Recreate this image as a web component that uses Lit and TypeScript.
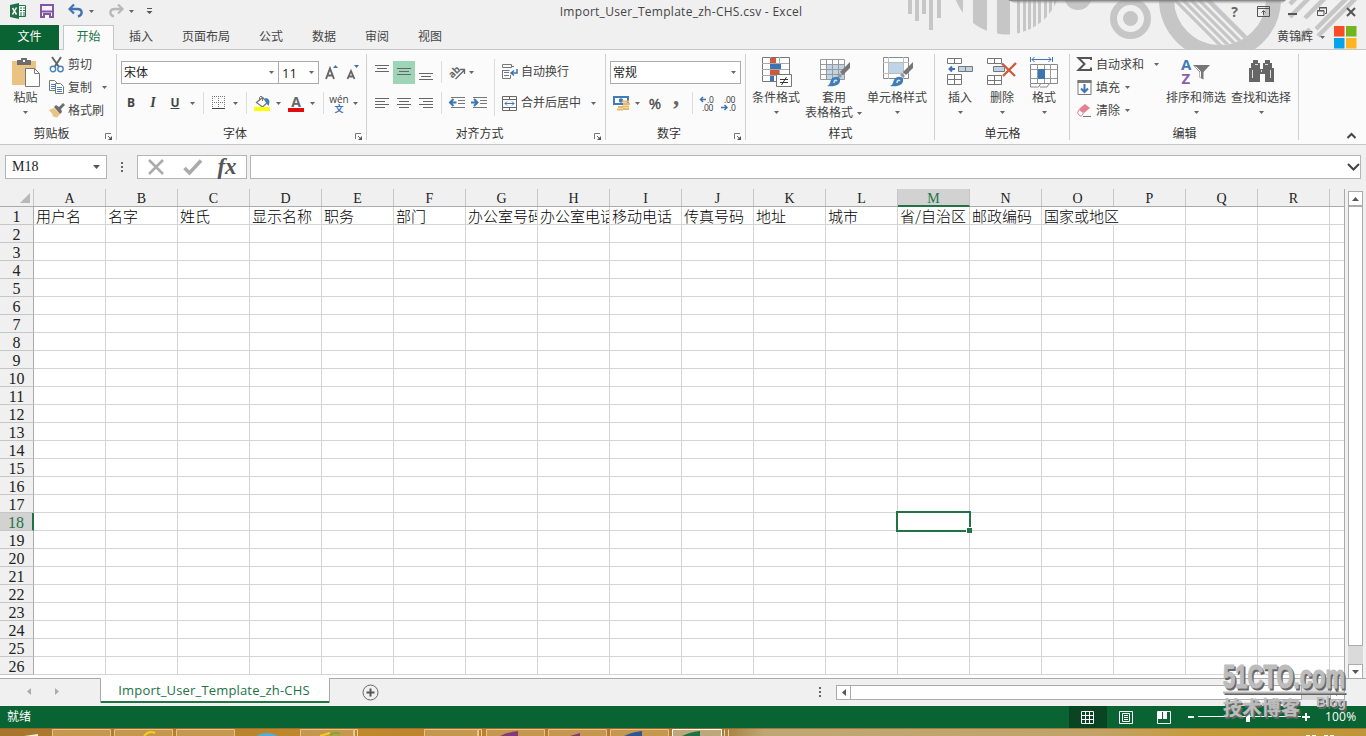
import {LitElement, html, svg, css} from 'lit';
import {customElement, property} from 'lit/decorators.js';
import {classMap} from 'lit/directives/class-map.js';

const COLUMNS = 'ABCDEFGHIJKLMNOPQR'.split('');
const ROWS = Array.from({length: 26}, (_, i) => i + 1);
const HEADERS = ['用户名', '名字', '姓氏', '显示名称', '职务', '部门', '办公室号码', '办公室电话', '移动电话',
    '传真号码', '地址', '城市', '省/自治区', '邮政编码', '国家或地区'];
const ACTIVE_COL = 'M';
const ACTIVE_ROW = 18;

const icon = (w: number, h: number, body: unknown) =>
    html`<svg class="icon" width=${w} height=${h} viewBox="0 0 ${w} ${h}" fill="none">${body}</svg>`;

const arrow = html`<svg class="icon arrow" width="5" height="3" viewBox="0 0 5 3"><path d="M0 0h5L2.5 3z" fill="#666"/></svg>`;
const sep = html`<i class="sep"></i>`;

// horizontal strokes given as [x, y, width]
const lines = (list: number[][], w = 15, h = 14) =>
    icon(w, h, list.map(([x, y, l]) => svg`<path d="M${x} ${y + .5}h${l}" stroke="#666"/>`));

const brush = svg`
    <path d="M30 5v6l-7 7-3-3z" fill="#777"/>
    <path d="M19 16l3 3-2 2-3-3z" fill="#999"/>
    <path d="M7 29c3-1 3-4 4-6 2-4 8-4 9-1 1 6-5 8-13 7z" fill="#3f7cb8"/>
    <path d="M14 26c0-3 2-3 3-2" stroke="#d5e6f4" stroke-width="1.5"/>`;

const icons = {
    excel: icon(17, 16, svg`
        <path d="M8 2.500h7.500v11H8" fill="#fff" stroke="#217346"/>
        <path d="M10 5h2M13 5h2M10 7.500h2M13 7.500h2M10 10h2M13 10h2M10 12h2M13 12h2" stroke="#217346" stroke-width="1.2"/>
        <path d="M0 2l9-2v16l-9-2z" fill="#1e7145"/>
        <path d="M2.500 5l4 6.500M6.500 4.500l-4 7" stroke="#fff" stroke-width="1.500"/>`),
    save: icon(14, 14, svg`
        <path d="M1 1h12v12H1z" fill="#f8f3fb" stroke="#8456a5" stroke-width="2"/>
        <path d="M1 7.500h12" stroke="#8456a5" stroke-width="2"/>
        <path d="M3 9h8v5H3z" fill="#8456a5"/><path d="M5 11h4v3H5z" fill="#fff"/>`),
    undo: icon(16, 14, svg`<path d="M2 5h7c6 0 6 6 1 7.500" stroke="#3f74b3" stroke-width="2.400"/><path d="M6 .5L1.500 5 6 9.500" stroke="#3f74b3" stroke-width="2.200"/>`),
    redo: icon(16, 14, svg`<path d="M14 5H7C1 5 1 11 6 12.500" stroke="#b8b8b8" stroke-width="2.400"/><path d="M10 .5L14.500 5 10 9.500" stroke="#b8b8b8" stroke-width="2.200"/>`),
    paste: icon(30, 31, svg`
        <path d="M1 4h24v24H1z" fill="#eac282"/>
        <path d="M6 3h4V1h6v2h4v5H6z" fill="#6d6d6d"/><path d="M12 3h2v2h-2z" fill="#fff"/>
        <path d="M14.500 11.500h9l5 5v13h-14z" fill="#fff" stroke="#777"/><path d="M23.500 11.500v5h5" stroke="#777"/>`),
    cut: icon(16, 16, svg`
        <path d="M3 0l7 10M12 0L5.500 10" stroke="#666" stroke-width="2"/>
        <circle cx="4" cy="12" r="2.700" stroke="#4a80b8" stroke-width="1.400"/><circle cx="11.500" cy="12" r="2.700" stroke="#4a80b8" stroke-width="1.400"/>`),
    copy: icon(16, 15, svg`
        <path d="M.5.5h5l3 3v7h-8z" fill="#fff" stroke="#777"/><path d="M2 4.500h4M2 6.500h4M2 8.500h4" stroke="#4a80b8"/>
        <path d="M6.500 3.500h5l3 3v7h-8z" fill="#fff" stroke="#777"/><path d="M8 7.500h5M8 9.500h5M8 11.500h5" stroke="#4a80b8"/>`),
    painter: icon(16, 15, svg`
        <path d="M0 7l5-2 6 6-3 3.500-4-1-1-3z" fill="#eac282"/>
        <path d="M5 4l2-2 3 2 4-4 2 2-4 4 1 3-2 2z" fill="#6d6d6d"/>`),
    border: icon(14, 14, svg`
        <path d="M.5 0v13M6.500 0v13M12.500 0v13M0 .5h13M0 6.500h13" stroke="#777" stroke-dasharray="1 1"/><path d="M0 12.500h13" stroke="#444"/>`),
    fill: icon(17, 17, svg`
        <path d="M2.500 7.500l6-5 5 5-5 4.500z" fill="#fff" stroke="#777" stroke-width="1.300"/><path d="M5.500 6V2.500q1.500-3 3 0V6" stroke="#777"/>
        <path d="M11 3c5 0 5 4 3.500 8l-3-4z" fill="#3f7cb8"/><path d="M0 12h16v4H0z" fill="#ff0"/>`),
    orient: icon(17, 16, svg`
        <text x="0" y="11" class="ab" transform="rotate(-45 6 9)">ab</text>
        <path d="M6.500 15l9-9M15.500 10V5.500H11" stroke="#666" stroke-width="1.300"/>`),
    outdent: icon(17, 12, svg`
        <path d="M2 .5h14M9 3.500h7M9 6.500h7M2 10.500h14" stroke="#777"/><path d="M7.500 5.500H2M4.500 2L1 5.500 4.500 9" stroke="#3f74b3" stroke-width="2"/>`),
    indent: icon(17, 12, svg`
        <path d="M2 .5h14M9 3.500h7M9 6.500h7M2 10.500h14" stroke="#777"/><path d="M0 5.500h5.500M3 2l3.500 3.500L3 9" stroke="#3f74b3" stroke-width="2"/>`),
    wrap: icon(17, 16, svg`
        <path d="M.5.500h9v3h-9zM.5 6v8.500h8V11M.5 6.500h7" stroke="#777"/><path d="M2 8.500h5M2 11.500h5" stroke="#777"/>
        <path d="M9 2.500h3" stroke="#777"/><path d="M15 5v4H9.500M12 6.500L9 9l3 2.500" stroke="#3f74b3" stroke-width="1.500"/>`),
    merge: icon(15, 15, svg`
        <path d="M.5.500h14v14H.5zM0 3.500h15M0 11.500h15M7.500 0v3M7.500 12v3" stroke="#666"/>
        <path d="M3 7.500h9M5 5.500l-2 2 2 2M10 5.500l2 2-2 2" stroke="#3f74b3"/>`),
    money: icon(17, 17, svg`
        <path d="M1 2h14v7H1z" fill="#fff" stroke="#3f7cb8" stroke-width="2"/><circle cx="8" cy="5.500" r="2.200" fill="#3f7cb8"/>
        <path d="M9 6.500h7M10 9h7M9 11.500h7M5 12h5M4 14.500h6M10 14h6" stroke="#e5b96c" stroke-width="1.800"/>`),
    lessDec: icon(16, 15, svg`
        <path d="M7 3.500H2M4 1L1.500 3.500 4 6" stroke="#3f74b3" stroke-width="1.500"/>
        <text x="8" y="7" class="dec">.0</text><text x="3" y="15" class="dec">.00</text>`),
    moreDec: icon(16, 15, svg`
        <path d="M0 11.500h6M3.500 9L6 11.500 3.500 14" stroke="#3f74b3" stroke-width="1.500"/>
        <text x="3" y="7" class="dec">.00</text><text x="8" y="15" class="dec">.0</text>`),
    cond: icon(31, 31, svg`
        <path d="M.5.500h27v24H.5z" fill="#fff" stroke="#777"/><path d="M8.500 0v24M17.500 0v24M0 6.500h27M0 12.500h27M0 18.500h27" stroke="#aaa"/>
        <path d="M8 1h6v5H8z" fill="#d1593a"/><path d="M8 7h11v5H8z" fill="#3f74b3"/><path d="M8 13h9v5H8z" fill="#d1593a"/><path d="M8 19h4v5H8z" fill="#3f74b3"/>
        <path d="M14.500 17.500h15v12h-15z" fill="#fff" stroke="#777"/><path d="M18 22.500h8M18 25.500h8M24.500 20l-5 8" stroke="#333"/>`),
    table: icon(31, 30, svg`
        <path d="M.5 2.500h24v20H.5z" fill="#fff"/><path d="M7 8h18v15H7z" fill="#c0d4e7"/>
        <path d="M.5 2.500h24v20H.5zM6.500 2v20M12.500 2v20M18.500 2v20M0 7.500h25M0 12.500h25M0 17.500h25" stroke="#999"/>${brush}`),
    cellStyle: icon(31, 30, svg`
        <path d="M.5.500h25v21H.5z" fill="#fff" stroke="#888"/><path d="M5.500 0v22M20.500 0v22M0 5.500h26M0 16.500h26" stroke="#bbb"/>
        <path d="M6 6h14v10H6z" fill="#c0d4e7"/>${brush}`),
    insert: icon(27, 30, svg`
        <path d="M.5 1.500h14v5H.5zM7.500 1v6M.5 17.500h14v10H.5zM7.500 17v11M0 22.500h15" fill="#fff" stroke="#777"/>
        <path d="M11.500 9.500h14v5h-14zM18.500 9v6" fill="#c0d4e7" stroke="#777"/><path d="M8 12H3M5 9.500L2.500 12 5 14.500" stroke="#3f74b3" stroke-width="2"/>`),
    remove: icon(31, 30, svg`
        <path d="M.5 1.500h14v5H.5zM7.500 1v6M.5 18.500h14v9H.5zM7.500 18v10M0 23.500h15" fill="#fff" stroke="#777"/>
        <path d="M6.500 9.500h11v5h-11z" fill="#c0d4e7" stroke="#777"/><path d="M15 6.500L28 19M29 6L16 19" stroke="#cf5a3c" stroke-width="2.400"/>`),
    format: icon(29, 31, svg`
        <path d="M.5 0v5M22.500 0v5M2 2.500h19M4.500 0L2 2.500 4.500 5M18.500 0L21 2.500 18.500 5" stroke="#3f74b3"/>
        <path d="M.5 7.500h27v19H.5z" fill="#fff" stroke="#888"/><path d="M7.500 7v19M14.500 7v19M20.500 7v19M0 12.500h27M0 21.500h27" stroke="#999"/>
        <path d="M8 12h7v10H8z" fill="#3f74b3"/><path d="M.5 27v3h8l2-3M10 30h7l2-3" stroke="#888" fill="#fff"/>`),
    sum: icon(15, 15, svg`<path d="M14 3V1H1.500l6 6-6 6H14v-2.500" stroke="#555" stroke-width="2"/>`),
    down: icon(14, 15, svg`<path d="M.5.500h13v14H.5z" fill="#fff" stroke="#777"/><path d="M0 0h14v3H0z" fill="#777"/>
        <path d="M7 4v8M3.500 8.500L7 12l3.500-3.500" stroke="#3f74b3" stroke-width="2"/>`),
    eraser: icon(15, 13, svg`<path d="M8 0l5 4-6 5-5-4z" fill="#e5808f"/><path d="M2 5.500l4.500 3.500-2 3H3L.5 9z" fill="#fff" stroke="#e5808f"/><path d="M6 12.500h8" stroke="#777"/>`),
    sort: icon(31, 28, svg`
        <text x="0" y="13" class="az a">A</text><text x=".5" y="27" class="az z">Z</text>
        <path d="M12 8h17l-6.500 7v7.500l-4-2V15z" fill="#777"/><path d="M14.500 9.500l5 5v6" stroke="#fff"/>`),
    find: icon(27, 27, svg`
        <path d="M5 3h5v3h2v6h3V6h2V3h5v3h2v5h2v14h-9v-8h-5v8H1V11h2V6h2z" fill="#666"/>
        <path d="M4.500 13v8M22.500 13v8M7 7.500h3M17 7.500h3M13.500 13v2" stroke="#ddd"/>`),
    launcher: icon(8, 8, svg`<path d="M.5 6V.5H6" stroke="#777"/><path d="M3 3l3 3" stroke="#666"/><path d="M7 3v4H3z" fill="#555"/>`),
};

const TOP_LINES = [[0, 0, 14], [2, 3, 10], [0, 6, 14]];
const CENTER_LINES = [[0, 0, 14], [2, 3, 10], [0, 6, 14], [2, 9, 10]];

@customElement('ribbon-group')
export class RibbonGroup extends LitElement {
    @property({type: String})
    label = '';

    @property({type: Boolean})
    launcher = false;

    static override styles = css`
      :host {
        display: flex;
        flex-direction: column;
        flex: none;
        box-sizing: border-box;
        height: 90px;
        position: relative;
      }
      :host::after {
        content: '';
        position: absolute;
        right: 0;
        top: 4px;
        bottom: 0;
        width: 1px;
        background: #cfcfcf;
      }
      .content {
        height: 76px;
        flex: none;
        display: flex;
      }
      .foot {
        height: 16px;
        flex: none;
        display: grid;
        grid-template-columns: 1fr 14px;
        align-items: center;
        text-align: center;
        color: #333;
      }
      .plain {
        grid-template-columns: 1fr;
      }
      .icon {
        display: block;
        margin: 6px 0 0 2px;
      }
    `;

    override render() {
        return html`
            <div class="content"><slot></slot></div>
            <div class=${classMap({foot: true, plain: !this.launcher})}><span>${this.label}</span>${this.launcher ? icons.launcher : ''}</div>
        `;
    }
}

@customElement('app-root')
export class AppRoot extends LitElement {
    static override styles = css`
      :host {
        display: flex;
        flex-direction: column;
        position: relative;
        width: 1366px;
        height: 736px;
        overflow: hidden;
        background: #f0f0f0;
        color: #444;
        font: 12px/16px 'Open Sans', 'Noto Sans CJK SC', sans-serif;
        white-space: nowrap;
      }
      .icon { display: block; flex: none; overflow: visible; }
      .decor { position: absolute; top: 0; left: 0; }
      .title-bar, .tabs { position: relative; display: flex; align-items: center; flex: none; }
      .title-bar { height: 25px; }
      .quick { display: grid; grid-template-columns: 30px 28px 21px 19px 21px 17px 18px; align-items: center; padding: 0 0 3px 10px; width: 174px; }
      .title { flex: 1; text-align: center; padding: 0 42px 2px 0; letter-spacing: 0.28px; }
      .controls { display: grid; grid-template-columns: repeat(5, 29px); justify-items: center; align-items: center; width: 146px; padding-bottom: 2px; }
      .q { font-weight: bold; font-size: 14px; color: #666; }
      .tabs { height: 24px; border-bottom: 1px solid #c6c6c6; }
      .tab { text-align: center; height: 25px; line-height: 23px; box-sizing: border-box; }
      .file { width: 59px; background: #0a6332; color: #fff; margin-right: 4px; }
      .home { width: 51px; border: 1px solid #c6c6c6; border-bottom: 0; background: #fbfbfb; color: #217346; line-height: 22px; }
      .insert { width: 54px; }
      .page { width: 76px; }
      .formula { width: 54px; }
      .data { width: 52px; }
      .user { display: flex; align-items: center; gap: 7px; margin-left: auto; padding-right: 9px; }
      .user .arrow { margin-right: 1px; }
      .ribbon { display: flex; flex: none; height: 94px; background: #fbfbfb; border-bottom: 1px solid #c6c6c6; position: relative; }
      .g-clip { width: 117px; }
      .g-font { width: 250px; }
      .g-align { width: 239px; }
      .g-num { width: 140px; }
      .g-style { width: 189px; }
      .g-cell { width: 135px; }
      .g-edit { width: 229px; }
      .row { display: grid; align-items: center; }
      .big { display: flex; flex-direction: column; align-items: center; padding-top: 7px; }
      .big .pic { height: 33px; display: flex; align-items: flex-start; }
      .big .arrow { margin-top: 5px; }
      .paste { width: 37px; padding-left: 7px; }
      .clip-list { padding: 3px 0 0 5px; }
      .clip-list .row { grid-template-columns: 19px 34px 10px; height: 23px; }
      .font-box { padding: 11px 0 0 4px; }
      .boxes { display: flex; height: 23px; align-items: center; }
      .combo { box-sizing: border-box; height: 23px; border: 1px solid #ababab; background: #fff; color: #222; display: flex; align-items: center; justify-content: space-between; padding: 0 4px 0 2px; }
      .family { width: 158px; }
      .size { width: 40px; border-left: 0; padding-left: 3px; font-size: 13px; line-height: 14px; }
      .grow { width: 22px; margin-left: 6px; }
      .font-tools { grid-template-columns: 20px 24px 20px 14px 8px 24px 8px 14px 18px 14px 22px 10px 12px 20px 12px; justify-items: center; margin-top: 8px; height: 22px; }
      .b { font-weight: bold; color: #444; }
      .i { font-style: italic; font-family: 'Liberation Serif'; font-weight: bold; font-size: 14px; }
      .u { text-decoration: underline; font-weight: bold; }
      .sep { width: 1px; height: 22px; background: #dcdcdc; }
      .red-a { font: bold 14px/12px 'Open Sans'; color: #666; border-bottom: 4px solid #e20c10; width: 16px; text-align: center; height: 12px; margin-top: 2px; }
      .wen { font-size: 10px; line-height: 10px; text-align: center; color: #444; }
      .wen b { display: block; color: #3f74b3; font-size: 9px; line-height: 9px; }
      .align-box { padding: 10px 0 0 4px; width: 123px; box-sizing: border-box; }
      .align-row { grid-template-columns: 22px 22px 22px 8px 24px 5px; height: 24px; justify-items: center; margin-bottom: 7px; }
      .indent-row { grid-template-columns: 22px 22px 22px 8px 24px 20px; }
      .on { width: 22px; height: 23px; background: #9fd5b7; display: grid; place-items: center; }
      .up { margin-bottom: 7px; }
      .dn { margin-top: 9px; }
      .wrap-box { padding: 10px 0 0 0; border-image: linear-gradient(#0000 10px, #dcdcdc 10px 65px, #0000 65px) 1; border-left: 1px solid; margin-left: 4px; }
      .wrap-row { grid-template-columns: 19px 70px 8px; height: 24px; padding-left: 7px; margin-bottom: 7px; }
      .num-box { padding: 11px 0 0 4px; }
      .value { width: 131px; }
      .num-tools { grid-template-columns: 20px 12px 24px 18px 14px 16px 28px; justify-items: center; margin-top: 8px; height: 22px; padding-left: 1px; }
      .pct { font-size: 15px; -webkit-text-stroke: 0.3px #444; }
      .comma { font: bold 25px/10px 'Liberation Serif'; height: 22px; color: #666; }
      .cond { margin-left: 5px; width: 50px; }
      .cond .pic { padding-left: 2px; }
      .tbl { margin-left: 1px; width: 64px; }
      .tbl .pic { padding-left: 2px; }
      .tbl .line { display: flex; align-items: center; gap: 4px; margin: -1px 1px 0 0; }
      .tbl .line .arrow { margin: 0; }
      .csty { width: 62px; }
      .csty .pic { padding-left: 3px; }
      .ins { margin-left: 13px; width: 24px; }
      .del { margin-left: 17px; width: 26px; }
      .fmt { margin-left: 16px; width: 26px; }
      .edit-list { padding: 3px 0 0 7px; width: 95px; box-sizing: border-box; }
      .edit-list .row { display: flex; height: 23px; }
      .edit-list .icon:first-child { width: 15px; margin-right: 4px; }
      .edit-list span + .arrow { margin-left: 5px; }
      .edit-list .far span + .arrow { margin-left: 10px; }
      .srt { width: 62px; }
      .fnd { width: 62px; margin-left: 3px; }
      .collapse { margin: 83px 0 0 48px; }
      .ab { font: bold 10px 'Open Sans'; fill: #666; }
      .dec { font: 8.500px 'Open Sans'; fill: #333; letter-spacing: -0.3px; }
      .az { font: bold 15px 'Open Sans'; }
      .a { fill: #3f7cb8; }
      .z { fill: #8b5fb0; }
      .formula-bar { display: flex; flex: none; height: 24px; padding: 10px 5px 10px 5px; }
      .box { box-sizing: border-box; background: #fff; border: 1px solid #b5b5b5; }
      .name { width: 102px; display: flex; align-items: center; justify-content: space-between; padding: 0 6px; font: 14px 'Liberation Serif'; color: #222; }
      .dots { width: 30px; display: grid; place-items: center; }
      .fx { width: 110px; display: grid; grid-template-columns: 36px 38px 30px; align-items: center; justify-items: center; margin-right: 3px; }
      .fx b { font: italic bold 23px/20px 'Liberation Serif'; color: #555; }
      .input { flex: 1; display: flex; align-items: center; justify-content: flex-end; }
      .sheet-area { display: flex; flex: none; height: 489px; }
      .sheet { width: 1345px; overflow: hidden; box-sizing: border-box; border-right: 1px solid #ababab; background: #fff; }
      .line { display: flex; }
      .head { height: 18px; box-sizing: border-box; border-bottom: 1px solid #ababab; background: #f0f0f0; }
      .corner { width: 34px; box-sizing: border-box; border-right: 1px solid #c6c6c6; padding: 4px 0 0 20px; }
      .col { width: 72px; box-sizing: border-box; border-right: 1px solid #c6c6c6; text-align: center; font: 14px/20px 'Liberation Serif'; color: #222; flex: none; }
      .col.sel { background: #d2d2d2; border-bottom: 2px solid #217346; color: #217346; height: 18px; }
      .num { width: 34px; flex: none; box-sizing: border-box; border-right: 1px solid #ababab; border-bottom: 1px solid #c6c6c6; background: #f0f0f0; text-align: center; font: 16px/20px 'Liberation Serif'; color: #222; height: 18px; }
      .num.sel { background: #d2d2d2; color: #217346; border-right: 2px solid #217346; }
      .cell { width: 72px; flex: none; box-sizing: border-box; height: 18px; border-right: 1px solid #d4d4d4; border-bottom: 1px solid #d4d4d4; padding-left: 2px; font: 15px/17px 'Noto Sans CJK SC', sans-serif; font-weight: 300; color: #000; overflow: hidden; }
      .cell.spill { overflow: visible; border-right-color: transparent; position: relative; }
      .cell.active { position: relative; overflow: visible; }
      .cell.active::before { content: ''; position: absolute; left: -2px; top: -2px; width: 71px; height: 17px; border: 2px solid #217346; }
      .cell.active::after { content: ''; position: absolute; right: -3px; bottom: -3px; width: 5px; height: 5px; background: #217346; border: solid #fff; border-width: 1px 0 0 1px; }
      .vscroll { width: 15px; margin-left: 3px; padding-top: 2px; display: flex; flex-direction: column; background: linear-gradient(#f0f0f0 2px, #dadada 2px); }
      .btn { width: 15px; height: 15px; box-sizing: border-box; border: 1px solid #ababab; background: #fff; display: grid; place-items: center; flex: none; }
      .vthumb { flex: 1; border: 1px solid #ababab; background: #fff; margin-bottom: 18px; }
      .vscroll .btn:last-child { margin-bottom: -1px; }
      .sheet-bar { display: flex; flex: none; height: 28px; box-sizing: border-box; position: relative; }
      .nav { width: 100px; border-top: 1px solid #ababab; box-sizing: border-box; display: grid; grid-template-columns: 28px 28px; padding: 0 0 3px 15px; place-items: center; }
      .sheet-tab { width: 230px; height: 25px; box-sizing: border-box; border: solid #ababab; border-width: 0 1px; background: #fff; color: #217346; font-size: 13px; line-height: 24px; text-align: center; box-shadow: inset 0 -2px #217346; letter-spacing: 0.17px; padding-right: 2px; }
      .rest { flex: 1; border-top: 1px solid #ababab; display: flex; align-items: center; box-sizing: border-box; padding: 0 21px 1px 32px; }
      .rest .dots { margin-left: 425px; width: 32px; padding-right: 1px; box-sizing: border-box; }
      .hthumb { width: 450px; height: 13px; border: 1px solid #ababab; border-left: 0; background: #fff; }
      .htrack { flex: 1; height: 15px; background: #dadada; }
      .status { display: flex; flex: none; height: 22px; background: #0a6332; color: #fff; align-items: center; padding-left: 7px; }
      .views { margin-left: auto; display: flex; height: 22px; }
      .view { width: 38px; display: grid; place-items: center; padding-right: 1px; box-sizing: border-box; }
      .view.sel { background: #094522; }
      .zoom { margin: 0 14px 0 5px; }
      .pc { width: 41px; letter-spacing: 0.2px; }
      .taskbar { display: block; flex: none; }
      .mark { position: absolute; left: 1218px; top: 656px; }
      .big-mark { font: bold 33px 'Liberation Sans'; stroke-width: 1.2px; }
      .cn-mark { font: bold 19px 'Noto Sans CJK SC'; stroke-width: 0.3px; }
      .blog { font: bold 14px 'Liberation Sans'; stroke-width: 0; }
    `;

    private decor() {
        const bars = [[908, 14], [915, 21], [922, 14], [929, 30], [937, 18]];
        return html`<svg class="decor" width="1366" height="49" viewBox="0 0 1366 49" fill="none">
            <defs>
                <clipPath id="disc"><circle cx="1006.500" cy="-20" r="54.500"/></clipPath>
                <clipPath id="lens"><circle cx="1220" cy="-2" r="47"/></clipPath>
                <linearGradient id="shade" x2="0" y2="1"><stop stop-color="#777"/><stop offset="1" stop-color="#aaa" stop-opacity="0"/></linearGradient>
            </defs>
            <g fill="#c6c6c6">
                ${bars.map(([x, h]) => svg`<path d="M${x} 0h4v${h}h-4z"/>`)}
                <g clip-path="url(#disc)">
                    <path d="M953 0h10v40h-10zM973 0h14v40h-14zM997 0h13v40h-13z"/>
                    ${[1017, 1023, 1028, 1033, 1038, 1044, 1049, 1054].map(x => svg`<path d="M${x} 0h3v40h-3z"/>`)}
                </g>
                <circle cx="1078" cy="-4" r="14"/>
                <circle cx="1130.500" cy="18.500" r="7.500"/>
            </g>
            <circle cx="1130.500" cy="18.500" r="17" stroke="#c6c6c6" stroke-width="7"/>
            <circle cx="1220" cy="-1" r="53.500" stroke="#c6c6c6" stroke-width="15"/>
            <g clip-path="url(#lens)" stroke="#c6c6c6">
                <path d="M1172-3l60 60M1180-3l60 60M1188-3l60 60M1196-3l60 60" stroke-width="3.300"/>
                <path d="M1205-3l60 60" stroke-width="4.500"/>
            </g>
            <path d="M1290 4l6-6M1290 17L1312-5M1305 18L1328-5M1316 29L1350-5M1318 36L1358-4M1298 41l12-12" stroke="#c6c6c6" stroke-width="4.500"/>
            <path d="M1008 0h278l-4 4H1016z" fill="url(#shade)"/>
        </svg>`;
    }

    private titleBar() {
        return html`
            <div class="title-bar">
                <div class="quick">
                    ${icons.excel}${icons.save}${icons.undo}${arrow}${icons.redo}${arrow}
                    ${icon(7, 7, svg`<path d="M1 .5h5" stroke="#555"/><path d="M.5 3h6l-3 3z" fill="#555"/>`)}
                </div>
                <div class="title">Import_User_Template_zh-CHS.csv - Excel</div>
                <div class="controls">
                    <span class="q">?</span>
                    ${icon(13, 11, svg`<path d="M.5.500h12v10H.5zM0 2.500h13M6.500 9V5M4.500 6.500l2-2 2 2" stroke="#555"/>`)}
                    ${icon(9, 9, svg`<path d="M0 7h9" stroke="#555" stroke-width="2"/>`)}
                    ${icon(10, 10, svg`<path d="M.5 3.500h6.500v5H.5zM2.500 3V.5h7v6H8" stroke="#555"/><path d="M0 4h7M2 1h8" stroke="#555"/>`)}
                    ${icon(10, 10, svg`<path d="M1 1l8 8M9 1L1 9" stroke="#555" stroke-width="2"/>`)}
                </div>
            </div>
            <div class="tabs">
                <div class="tab file">文件</div>
                <div class="tab home">开始</div>
                <div class="tab insert">插入</div>
                <div class="tab page">页面布局</div>
                <div class="tab formula">公式</div>
                <div class="tab data">数据</div>
                <div class="tab formula">审阅</div>
                <div class="tab data">视图</div>
                <div class="user"><span>黄锦辉</span>${arrow}
                    ${icon(24, 24, svg`<path d="M1 1h10.500v10.500H1z" fill="#fb4b26"/><path d="M13 1h10.500v10.500H13z" fill="#70b71e"/><path d="M1 13h10.500v10.500H1z" fill="#05a4ea"/><path d="M13 13h10.500v10.500H13z" fill="#fdb420"/>`)}
                </div>
            </div>`;
    }

    private big(cls: string, pic: unknown, text: string) {
        return html`<div class="big ${cls}"><div class="pic">${pic}</div><span>${text}</span>${arrow}</div>`;
    }

    private ribbon() {
        return html`
            <div class="ribbon">
                <ribbon-group class="g-clip" label="剪贴板" launcher>
                    ${this.big('paste', icons.paste, '粘贴')}
                    <div class="clip-list">
                        <div class="row">${icons.cut}<span>剪切</span></div>
                        <div class="row">${icons.copy}<span>复制</span>${arrow}</div>
                        <div class="row">${icons.painter}<span>格式刷</span></div>
                    </div>
                </ribbon-group>
                <ribbon-group class="g-font" label="字体" launcher>
                    <div class="font-box">
                        <div class="boxes">
                            <div class="combo family"><span>宋体</span>${arrow}</div>
                            <div class="combo size"><span>11</span>${arrow}</div>
                            <div class="grow">${icon(15, 16, svg`<path d="M1 14L5 3.500 9 14M2.500 10.500h5" stroke="#666" stroke-width="1.900"/><path d="M8 3l2.500-3L13 3z" fill="#3f74b3"/>`)}</div>
                            ${icon(13, 16, svg`<path d="M.5 14L4 6 7.500 14M2 11.500h4" stroke="#666" stroke-width="1.800"/><path d="M7 0h5L9.500 3z" fill="#3f74b3"/>`)}
                        </div>
                        <div class="row font-tools">
                            <span class="b">B</span><span class="i">I</span><span class="u">U</span>${arrow}${sep}
                            ${icons.border}${arrow}${sep}${icons.fill}${arrow}
                            <span class="red-a">A</span>${arrow}${sep}<span class="wen">wén<b>文</b></span>
                            ${arrow}
                        </div>
                    </div>
                </ribbon-group>
                <ribbon-group class="g-align" label="对齐方式" launcher>
                    <div class="align-box">
                        <div class="row align-row">
                            <span class="up">${lines(TOP_LINES, 14, 8)}</span>
                            <span class="on">${lines(TOP_LINES, 14, 8)}</span>
                            <span class="dn">${lines(TOP_LINES, 14, 8)}</span>
                            ${sep}${icons.orient}${arrow}
                        </div>
                        <div class="row align-row indent-row">
                            ${lines([[0, 0, 14], [0, 3, 10], [0, 6, 14], [0, 9, 10]], 14, 10)}
                            ${lines(CENTER_LINES, 14, 10)}
                            ${lines([[0, 0, 14], [4, 3, 10], [0, 6, 14], [4, 9, 10]], 14, 10)}
                            ${sep}${icons.outdent}${icons.indent}
                        </div>
                    </div>
                    <div class="wrap-box">
                        <div class="row wrap-row">${icons.wrap}<span>自动换行</span></div>
                        <div class="row wrap-row">${icons.merge}<span>合并后居中</span>${arrow}</div>
                    </div>
                </ribbon-group>
                <ribbon-group class="g-num" label="数字" launcher>
                    <div class="num-box">
                        <div class="combo value"><span>常规</span>${arrow}</div>
                        <div class="row num-tools">
                            ${icons.money}${arrow}<span class="pct">%</span><span class="comma">,</span>
                            ${sep}${icons.lessDec}${icons.moreDec}
                        </div>
                    </div>
                </ribbon-group>
                <ribbon-group class="g-style" label="样式">
                    ${this.big('cond', icons.cond, '条件格式')}
                    <div class="big tbl">
                        <div class="pic">${icons.table}</div><span>套用</span>
                        <div class="line"><span>表格格式</span>${arrow}</div>
                    </div>
                    ${this.big('csty', icons.cellStyle, '单元格样式')}
                </ribbon-group>
                <ribbon-group class="g-cell" label="单元格">
                    ${this.big('ins', icons.insert, '插入')}
                    ${this.big('del', icons.remove, '删除')}
                    ${this.big('fmt', icons.format, '格式')}
                </ribbon-group>
                <ribbon-group class="g-edit" label="编辑">
                    <div class="edit-list">
                        <div class="row far">${icons.sum}<span>自动求和</span>${arrow}</div>
                        <div class="row">${icons.down}<span>填充</span>${arrow}</div>
                        <div class="row">${icons.eraser}<span>清除</span>${arrow}</div>
                    </div>
                    ${this.big('srt', icons.sort, '排序和筛选')}
                    ${this.big('fnd', icons.find, '查找和选择')}
                </ribbon-group>
                <div class="collapse">${icon(9, 6, svg`<path d="M.5 5l4-4 4 4" stroke="#444" stroke-width="2"/>`)}</div>
            </div>`;
    }

    private cell(row: number, i: number) {
        const text = row === 1 ? HEADERS[i] ?? '' : '';
        const cls = {
            cell: true,
            spill: row === 1 && i === HEADERS.length - 1,
            active: row === ACTIVE_ROW && COLUMNS[i] === ACTIVE_COL,
        };
        return html`<div class=${classMap(cls)}>${text}</div>`;
    }

    private sheet() {
        return html`
            <div class="sheet-area">
                <div class="sheet">
                    <div class="line head">
                        <div class="corner">${icon(10, 10, svg`<path d="M10 0v10H0z" fill="#b8b8b8"/>`)}</div>
                        ${COLUMNS.map(c => html`<div class=${classMap({col: true, sel: c === ACTIVE_COL})}>${c}</div>`)}
                    </div>
                    ${ROWS.map(r => html`
                        <div class="line">
                            <div class=${classMap({num: true, sel: r === ACTIVE_ROW})}>${r}</div>
                            ${[...COLUMNS, ''].map((_, i) => this.cell(r, i))}
                        </div>`)}
                </div>
                <div class="vscroll">
                    <div class="btn">${icon(7, 4, svg`<path d="M0 4l3.500-4L7 4z" fill="#555"/>`)}</div>
                    <div class="vthumb"></div>
                    <div class="btn">${icon(7, 4, svg`<path d="M0 0h7L3.500 4z" fill="#555"/>`)}</div>
                </div>
            </div>`;
    }

    private bottom() {
        const tasks = [[52, 58], [114, 58], [176, 58], [300, 53], [424, 53], [486, 58], [548, 58], [610, 58]];
        return html`
            <div class="sheet-bar">
                <div class="nav">
                    ${icon(4, 7, svg`<path d="M4 0v7L0 3.500z" fill="#ababab"/>`)}
                    ${icon(4, 7, svg`<path d="M0 0v7l4-3.500z" fill="#ababab"/>`)}
                </div>
                <div class="sheet-tab">Import_User_Template_zh-CHS</div>
                <div class="rest">
                    ${icon(17, 17, svg`<circle cx="8.500" cy="8.500" r="7.500" stroke="#666"/><path d="M4.500 8.500h8M8.500 4.500v8" stroke="#555" stroke-width="2"/>`)}
                    <div class="dots">${this.dots()}</div>
                    <div class="btn">${icon(4, 7, svg`<path d="M4 0v7L0 3.500z" fill="#555"/>`)}</div>
                    <div class="hthumb"></div><div class="htrack"></div>
                    <div class="btn">${icon(4, 7, svg`<path d="M0 0v7l4-3.500z" fill="#555"/>`)}</div>
                </div>
            </div>
            <div class="status">
                <span>就绪</span>
                <div class="views">
                    <div class="view sel">${icon(13, 13, svg`<path d="M.5.500h12v12H.5zM4.500 0v13M8.500 0v13M0 4.500h13M0 8.500h13" stroke="#fff"/>`)}</div>
                    <div class="view">${icon(14, 13, svg`<path d="M.5.500h13v12H.5zM3.500 2.500h7v8h-7zM5 4.500h4M5 6.500h4M5 8.500h4" stroke="#fff"/>`)}</div>
                    <div class="view">${icon(14, 13, svg`<path d="M.5.500h13v12H.5z" stroke="#fff"/><path d="M1 1h4v7H1zM6 1h4v7H6z" fill="#fff"/>`)}</div>
                </div>
                <div class="zoom">${icon(123, 12, svg`<path d="M0 6h6M114 6h8M118 2v8" stroke="#fff" stroke-width="2"/><path d="M10 5.500h103" stroke="#fff"/><path d="M58 1h4v10h-4z" fill="#fff"/>`)}</div>
                <span class="pc">100%</span>
            </div>
            <svg class="taskbar" width="1366" height="8" viewBox="0 0 1366 8" fill="none">
                <defs><linearGradient id="wood">
                    <stop stop-color="#a8752e"/><stop offset=".25" stop-color="#c18a2c"/><stop offset=".45" stop-color="#ba7630"/>
                    <stop offset=".53" stop-color="#a5803d"/><stop offset=".56" stop-color="#bfa775"/><stop offset=".8" stop-color="#c1a369"/>
                    <stop offset=".88" stop-color="#c59a3a"/><stop offset="1" stop-color="#bf9539"/>
                </linearGradient></defs>
                <path d="M0 0h1366v8H0z" fill="url(#wood)"/>
                ${tasks.map(([x, w]) => svg`<path d="M${x + .5} 8V1.500h${w}V8" fill="#c6984f" stroke="#e0c48c"/>`)}
                <path d="M672.500 8V1.500h49V8" fill="#bda87c" stroke="#fff"/>
                <path d="M354.500 8V1.500h3V8M478.500 8V1.500h3V8M724.500 8V1.500M728.500 8V1.500" stroke="#ead09a"/>
                <path d="M0 .5h1366" stroke="#8a5e20" stroke-opacity=".6"/>
                <path d="M500 8q8-4 18-5v5zM570 8l10-3v3z" fill="#843a74"/><path d="M624 8q8-4 18-5v5z" fill="#2f5597"/><path d="M682 8q8-4 18-5v5z" fill="#1e7145"/>
                <path d="M144 8q5-6 11-3M320 8l10-3" stroke="#f8cd20" stroke-width="2"/><path d="M330 7q5-4 10-1" stroke="#6eae35" stroke-width="2"/>
                <path d="M256 8q11-6 22 0z" fill="#54ade0"/><path d="M24 8l14-2v2z" fill="#f6eedb"/>
                <path d="M1306 7.500h11M1324 7.500h11" stroke="#fff" stroke-dasharray="4 2"/>
            </svg>`;
    }

    private dots() {
        return icon(2, 10, svg`<path d="M0 0h2v2H0zM0 4h2v2H0zM0 8h2v2H0z" fill="#666"/>`);
    }

    // text is painted twice, shadow first, for the embossed look
    private watermark() {
        const layer = (fill: string, d: number) => svg`
            <g fill=${fill} stroke=${fill} stroke-width="0" transform="translate(${d} ${d})">
                <text class="big-mark" x="5" y="32" textLength="122" lengthAdjust="spacingAndGlyphs">51CTO.com</text>
                <path d="M5 35.500h122v2H5z"/>
                <text class="cn-mark" x="5" y="59" textLength="77" lengthAdjust="spacingAndGlyphs">技术博客</text>
                <text class="blog" x="98" y="51" textLength="30" lengthAdjust="spacingAndGlyphs">Blog</text>
            </g>`;
        return html`<svg class="mark" width="134" height="66" viewBox="0 0 134 66">${layer('#666', 1.5)}${layer('#bcbcbc', 0)}</svg>`;
    }

    override render() {
        return html`
            ${this.decor()}
            ${this.titleBar()}
            ${this.ribbon()}
            <div class="formula-bar">
                <div class="box name"><span>M18</span>${icon(7, 4, svg`<path d="M0 0h7L3.500 4z" fill="#555"/>`)}</div>
                <div class="dots">${this.dots()}</div>
                <div class="box fx">
                    ${icon(18, 16, svg`<path d="M2 1l14 14M16 1L2 15" stroke="#aaa" stroke-width="2.500"/>`)}
                    ${icon(20, 16, svg`<path d="M1.500 9l5 5L18 1.500" stroke="#aaa" stroke-width="3.500"/>`)}
                    <b>fx</b>
                </div>
                <div class="box input">${icon(13, 8, svg`<path d="M1 1l5.500 5.500L12 1" stroke="#444" stroke-width="2"/>`)}</div>
            </div>
            ${this.sheet()}
            ${this.bottom()}
            ${this.watermark()}
        `;
    }
}

declare global {
    interface HTMLElementTagNameMap {
        'ribbon-group': RibbonGroup;
        'app-root': AppRoot;
    }
}
